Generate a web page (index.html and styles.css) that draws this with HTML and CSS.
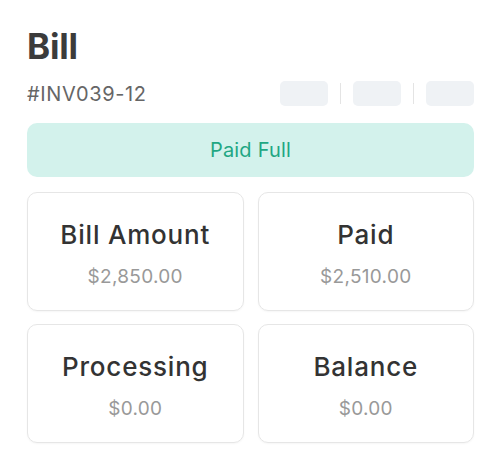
FILE: index.html
```html
<!DOCTYPE html>
<html lang="en">
<head>
    <meta charset="UTF-8">
    <meta name="viewport" content="width=device-width, initial-scale=1.0">
    <title>Bill</title>
    <link rel="stylesheet" href="styles.css">
</head>
<body>

    <div class="bill">
        <h1 class="bill-title">Bill</h1>

        <div class="bill-meta">
            <span class="bill-number">#INV039-12</span>
            <div class="bill-actions">
                <span class="action"></span>
                <span class="divider"></span>
                <span class="action"></span>
                <span class="divider"></span>
                <span class="action"></span>
            </div>
        </div>

        <div class="status">Paid Full</div>

        <!-- Amount summary -->
        <div class="summary">
            <div class="card">
                <div class="card-title">Bill Amount</div>
                <div class="card-value">$2,850.00</div>
            </div>
            <div class="card">
                <div class="card-title">Paid</div>
                <div class="card-value">$2,510.00</div>
            </div>
            <div class="card">
                <div class="card-title">Processing</div>
                <div class="card-value">$0.00</div>
            </div>
            <div class="card">
                <div class="card-title">Balance</div>
                <div class="card-value">$0.00</div>
            </div>
        </div>
    </div>

</body>
</html>
```

FILE: styles.css
```css
body {
    margin: 0;
    font-family: Inter, "Noto Sans", sans-serif;
    background-color: #fff;
}
.bill {
    padding: 26px 27px 20px 27px;
}
.bill-title {
    margin: 0;
    font-size: 35px;
    font-weight: 700;
    line-height: 40px;
    color: #3b3b3b;
    letter-spacing: -0.2px;
}
.bill-meta {
    display: flex;
    align-items: center;
    justify-content: space-between;
    margin-top: 15px;
}
.bill-number {
    font-size: 20px;
    color: #666;
    letter-spacing: 0.6px;
}
.bill-actions {
    display: flex;
    align-items: center;
    gap: 12px;
}
.action {
    width: 48px;
    height: 25px;
    border-radius: 5px;
    background-color: #eff2f5;
}
.divider {
    width: 1px;
    height: 21px;
    background-color: #e4e4e4;
}
.status {
    margin-top: 17px;
    height: 54px;
    line-height: 54px;
    border-radius: 10px;
    background-color: #d3f2ec;
    color: #1fa783;
    font-size: 20px;
    text-align: center;
    letter-spacing: 0.2px;
}
.summary {
    display: grid;
    grid-template-columns: 1fr 1fr;
    gap: 13px 14px;
    margin-top: 15px;
}
.card {
    height: 119px;
    box-sizing: border-box;
    padding-top: 4px;
    border: 1px solid #e6e6e6;
    border-radius: 10px;
    box-shadow: 0 1px 2px rgba(0, 0, 0, 0.04);
    display: flex;
    flex-direction: column;
    align-items: center;
    justify-content: center;
}
.card-title {
    font-size: 26px;
    font-weight: 500;
    color: #333;
    letter-spacing: 0.8px;
}
.card-value {
    margin-top: 15px;
    font-size: 19px;
    color: #999;
    letter-spacing: 0.3px;
}
```
